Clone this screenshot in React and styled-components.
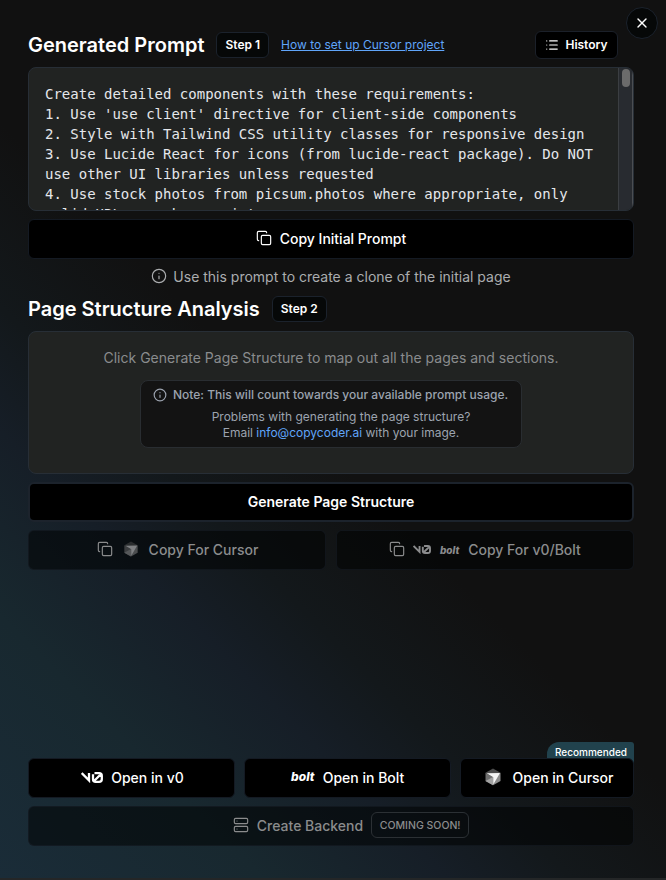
import React from 'react';
import styled, { createGlobalStyle, css } from 'styled-components';
import { Copy, Info, List, Server, X } from 'lucide-react';

const Global = createGlobalStyle`
  * { box-sizing: border-box; }
  body { margin: 0; background: #111; overflow: hidden; }
  button { font: inherit; }
`;

const Page = styled.main`
  width: 666px;
  height: 880px;
  padding: 31px 32px 32px 28px;
  display: flex;
  flex-direction: column;
  background: linear-gradient(45deg, #1a2c38 0%, #18282f 17%, #161e27 29%, #13181b 37%, #111111 49%);
  border-bottom: 2px solid #242627;
  font-family: Inter, sans-serif;
  color: #fff;
`;

const CloseButton = styled.button`
  position: absolute;
  left: 626px;
  top: 7px;
  width: 32px;
  height: 32px;
  padding: 0;
  display: grid;
  place-items: center;
  border: 1px solid #1b222c;
  border-radius: 50%;
  background: #060808;
  color: #fff;
`;

const Header = styled.header`
  display: flex;
  align-items: center;
  height: 28px;
`;

const Title = styled.h2`
  margin: 0 12px 0 0;
  font-size: 20px;
  line-height: 28px;
  font-weight: 600;
  white-space: nowrap;
`;

const StepBadge = styled.span`
  height: 26px;
  padding: 0 8px 1px;
  display: flex;
  align-items: center;
  border: 1px solid #1b222c;
  border-radius: 6px;
  background: #060808;
  font-size: 12px;
  font-weight: 600;
  white-space: nowrap;
`;

const GuideLink = styled.a`
  margin-left: 12px;
  padding-bottom: 1px;
  color: #60a5fa;
  font-size: 12px;
  text-decoration: underline;
  white-space: nowrap;
`;

const HistoryButton = styled.button`
  height: 28px;
  width: 83px;
  margin: 0 16px 0 auto;
  padding: 0 0 1px;
  display: flex;
  align-items: center;
  justify-content: center;
  gap: 6px;
  border: 1px solid #1b2029;
  border-radius: 6px;
  background: #000;
  color: #fff;
  font-size: 12px;
  font-weight: 600;
`;

const PromptBox = styled.div`
  display: flex;
  height: 144px;
  margin-top: 8px;
  flex: none;
  overflow: hidden;
  border: 1px solid #272e36;
  border-radius: 8px;
  background: #212322;
`;

const PromptText = styled.pre`
  flex: 1;
  margin: 0;
  padding: 16px;
  color: #e5e7eb;
  font: 14px/20px 'DejaVu Sans Mono', monospace;
  white-space: pre-wrap;
`;

const ScrollTrack = styled.div`
  width: 15px;
  padding: 1px 3px;
  border-left: 1px solid #3b3e42;
  border-right: 1px solid #4b4e52;
  background: #282b30;
`;

const ScrollThumb = styled.div`
  width: 8px;
  height: 18px;
  border-radius: 4px;
  background: #6b6b6b;
`;

const Button = styled.button`
  position: relative;
  width: ${(p) => p.$width || '100%'};
  height: 40px;
  flex: none;
  padding: 0 0 2px ${(p) => p.$shift || 0}px;
  display: flex;
  align-items: center;
  justify-content: center;
  gap: ${(p) => p.$gap || 8}px;
  border: ${(p) => (p.$strong ? '2px solid #1c232c' : '1px solid #141a23')};
  border-radius: 6px;
  background: #000;
  color: #fff;
  font-size: 14px;
  font-weight: ${(p) => (p.$heavy ? 600 : 500)};
  white-space: nowrap;
  ${(p) => p.$disabled && css`
    background: rgba(0, 2, 2, 0.55);
    border-color: rgba(26, 34, 44, 0.5);
    color: #8b8c8d;
  `}
`;

const Hint = styled.p`
  display: flex;
  align-items: center;
  justify-content: center;
  gap: 6px;
  height: 20px;
  margin: 7px 0 9px;
  color: #abadaf;
  font-size: 14px;
`;

const AnalysisPanel = styled.section`
  display: flex;
  flex-direction: column;
  align-items: center;
  flex: none;
  height: 143px;
  margin: 8px 0;
  padding-top: 16px;
  border: 1px solid #272e36;
  border-radius: 8px;
  background: #212322;
`;

const PanelLead = styled.p`
  margin: 0 0 12px;
  color: #8a8c8e;
  font-size: 14px;
  line-height: 20px;
`;

const NoteCard = styled.div`
  width: 382px;
  height: 68px;
  padding: 6px 12px;
  border: 1px solid #292d31;
  border-radius: 8px;
  background: #131313;
  color: #9ca3af;
  font-size: 12px;
  line-height: 16px;
`;

const NoteTitle = styled.div`
  display: flex;
  align-items: center;
  gap: 6px;
  font-weight: 500;
`;

const NoteBody = styled.p`
  margin: 6px 0 0 20px;
  text-align: center;
`;

const MailLink = styled.a`
  color: #60a5fa;
`;

const Row = styled.div`
  display: flex;
  justify-content: space-between;
  margin-top: ${(p) => p.$top}px;
`;

const Brand = styled.span`
  display: flex;
  align-items: center;
  margin-right: ${(p) => p.$after || 0}px;
  opacity: ${(p) => (p.$dim ? 0.5 : 1)};
`;

const BoltWord = styled.span`
  width: ${(p) => (p.$small ? 21 : 24)}px;
  padding-top: ${(p) => (p.$small ? 1 : 0)}px;
  font-size: ${(p) => (p.$small ? 10 : 12)}px;
  line-height: 16px;
  font-style: italic;
  font-weight: 800;
  color: ${(p) => (p.$small ? '#8b8c8d' : '#fff')};
`;

const CursorWrap = styled.div`
  position: relative;
  width: 174px;
`;

const Recommended = styled.span`
  position: absolute;
  right: 0;
  top: -16px;
  width: 87px;
  height: 24px;
  padding: 3px 0 0 1px;
  border-radius: 12px 3px 0 0;
  background: #21424d;
  font-size: 10px;
  line-height: 14px;
  font-weight: 500;
  text-align: center;
`;

const SoonBadge = styled.span`
  width: 98px;
  height: 26px;
  display: flex;
  align-items: center;
  justify-content: center;
  border: 1px solid #2b3034;
  border-radius: 6px;
  font-size: 10.5px;
`;

function V0Logo({ width = 22 }) {
  return (
    <svg width={width} height={width / 2} viewBox="0 0 22 11" fill="none" stroke="currentColor" strokeWidth="2.3">
      <path d="M.7 1.1 8 8.4V1.1" />
      <path d="M13.5 1.2h4.6Q20.8 1.2 20.8 3.8V7.2Q20.8 9.8 18.1 9.8H14.7Q12 9.8 12 7.2V2.2M12.8 9.2 20.2 1.9" />
    </svg>
  );
}

function CursorLogo({ size = 18 }) {
  return (
    <svg width={size} height={size} viewBox="0 0 18 18">
      <path d="M9 .6 16.5 4.8 9 9 1.5 4.8Z" fill="#4c4c4c" />
      <path d="M1.5 4.8 9 9v8.3l-7.5-4.2Z" fill="#6f6f6f" />
      <path d="M1.5 13.1 9 9v8.3Z" fill="#a2a2a2" />
      <path d="M16.5 4.8v8.3L9 17.3V9Z" fill="#8c8c8c" />
      <path d="M2.6 5.3 16 5 9.3 16.6V9.2Z" fill="#f4f4f4" />
    </svg>
  );
}

const promptLines = `Create detailed components with these requirements:
1. Use 'use client' directive for client-side components
2. Style with Tailwind CSS utility classes for responsive design
3. Use Lucide React for icons (from lucide-react package). Do NOT use other UI libraries unless requested
4. Use stock photos from picsum.photos where appropriate, only valid URLs you know exist`;

export default function App() {
  return (
    <Page>
      <Global />
      <CloseButton aria-label="Close"><X size={16} /></CloseButton>
      <Header>
        <Title>Generated Prompt</Title>
        <StepBadge>Step 1</StepBadge>
        <GuideLink>How to set up Cursor project</GuideLink>
        <HistoryButton><List size={14} />History</HistoryButton>
      </Header>
      <PromptBox>
        <PromptText>{promptLines}</PromptText>
        <ScrollTrack><ScrollThumb /></ScrollTrack>
      </PromptBox>
      <Row $top={8}>
        <Button><Copy size={16} strokeWidth={1.75} />Copy Initial Prompt</Button>
      </Row>
      <Hint><Info size={16} strokeWidth={1.75} />Use this prompt to create a clone of the initial page</Hint>
      <Header>
        <Title>Page Structure Analysis</Title>
        <StepBadge>Step 2</StepBadge>
      </Header>
      <AnalysisPanel>
        <PanelLead>Click Generate Page Structure to map out all the pages and sections.</PanelLead>
        <NoteCard>
          <NoteTitle><Info size={14} />Note: This will count towards your available prompt usage.</NoteTitle>
          <NoteBody>
            Problems with generating the page structure?<br />
            Email <MailLink>info@copycoder.ai</MailLink> with your image.
          </NoteBody>
        </NoteCard>
      </AnalysisPanel>
      <Button $strong $heavy>Generate Page Structure</Button>
      <Row $top={8}>
        <Button $width="298px" $disabled $gap={10} $shift={1}>
          <Copy size={16} strokeWidth={1.75} />
          <Brand $dim><CursorLogo size={16} /></Brand>
          Copy For Cursor
        </Button>
        <Button $width="298px" $disabled>
          <Copy size={16} strokeWidth={1.75} />
          <V0Logo width={18} />
          <BoltWord $small>bolt</BoltWord>
          Copy For v0/Bolt
        </Button>
      </Row>
      <Row $top={188}>
        <Button $width="207px" $shift={2}><V0Logo />Open in v0</Button>
        <Button $width="207px"><BoltWord>bolt</BoltWord>Open in Bolt</Button>
        <CursorWrap>
          <Recommended>Recommended</Recommended>
          <Button $shift={3}><Brand $after={3}><CursorLogo /></Brand>Open in Cursor</Button>
        </CursorWrap>
      </Row>
      <Row $top={8}>
        <Button $disabled $shift={40}>
          <Server size={16} strokeWidth={1.75} />Create Backend<SoonBadge>COMING SOON!</SoonBadge>
        </Button>
      </Row>
    </Page>
  );
}
